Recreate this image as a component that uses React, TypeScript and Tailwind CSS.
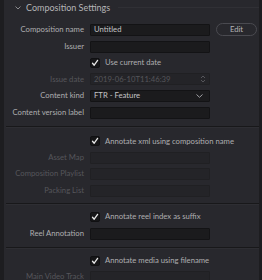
import React from "react";

const font = { fontFamily: 'Lato, "Open Sans", "Liberation Sans", sans-serif' };

function Check() {
  return (
    <div className="w-[10px] h-[10px] rounded-[2px] bg-[#161618] border border-[#101012] flex items-center justify-center">
      <svg width="8" height="8" viewBox="0 0 8 8">
        <path d="M1.5 4.3 L3.2 6.2 L6.6 1.4" fill="none" stroke="#e8e8e8" strokeWidth="1.3" strokeLinecap="round" strokeLinejoin="round" />
      </svg>
    </div>
  );
}

function Row({ label, dim, children }: { label: string; dim?: boolean; children?: React.ReactNode }) {
  return (
    <div className="flex items-center h-[12px] shrink-0">
      <div className={`w-[80px] text-right text-[7.7px] leading-none whitespace-nowrap ${dim ? "text-[#56565b]" : "text-[#aeaeb0]"}`}>{label}</div>
      <div className="ml-[6px] flex items-center">{children}</div>
    </div>
  );
}

function Input({ value, dim, right }: { value?: string; dim?: boolean; right?: React.ReactNode }) {
  return (
    <div className={`w-[120px] h-[12px] rounded-[1px] border flex items-center px-[3px] text-[7.7px] leading-none ${dim ? "bg-[#242428] border-[#202023] text-[#55555a]" : "bg-[#1b1b1d] border-[#131315] text-[#c4c4c6]"}`}>
      <span className="flex-1 whitespace-nowrap">{value}</span>
      {right}
    </div>
  );
}

function CheckRow({ label }: { label: string }) {
  return (
    <div className="flex items-center h-[11px] shrink-0">
      <div className="w-[86px]" />
      <Check />
      <span className="ml-[5px] text-[7.7px] leading-none text-[#aeaeb0] whitespace-nowrap">{label}</span>
    </div>
  );
}

function Sep() {
  return <div className="ml-[2px] h-px bg-[#18181a] border-b border-[#2e2e33] box-content" />;
}

export default function App() {
  return (
    <div className="w-[262px] h-[280px] bg-[#1d1d20] flex overflow-hidden" style={font}>
      <div className="ml-[4px] w-[255px] h-full bg-[#28282d] flex flex-col overflow-hidden">
        <div className="h-[15px] flex items-center shrink-0">
          <svg width="6" height="4" viewBox="0 0 6 4" className="ml-[11px]">
            <path d="M0.5 0.5 L3 3 L5.5 0.5" fill="none" stroke="#8a8a8e" strokeWidth="1" />
          </svg>
          <span className="ml-[5px] text-[9px] leading-none text-[#b4b4b6]">Composition Settings</span>
          <div className="flex-1 ml-[8px] h-px bg-[#303035]" />
        </div>
        <div className="mt-[8px] flex flex-col gap-[4.8px] shrink-0">
          <div className="flex items-center">
            <Row label="Composition name">
              <Input value="Untitled" />
            </Row>
            <div className="ml-[6px] w-[41px] h-[13px] rounded-full border border-[#4a4a50] flex items-center justify-center text-[7.7px] leading-none text-[#b4b4b6]">Edit</div>
          </div>
          <Row label="Issuer">
            <Input />
          </Row>
          <CheckRow label="Use current date" />
          <Row label="Issue date" dim>
            <Input
              value="2019-06-10T11:46:39"
              dim
              right={
                <svg width="6" height="8" viewBox="0 0 6 8">
                  <path d="M1 3 L3 1 L5 3 M1 5 L3 7 L5 5" fill="none" stroke="#55555a" strokeWidth="1" />
                </svg>
              }
            />
          </Row>
          <Row label="Content kind">
            <Input
              value="FTR - Feature"
              right={
                <svg width="7" height="4" viewBox="0 0 7 4" className="mr-[3px]">
                  <path d="M0.5 0.5 L3.5 3.3 L6.5 0.5" fill="none" stroke="#a0a0a4" strokeWidth="1" />
                </svg>
              }
            />
          </Row>
          <Row label="Content version label">
            <Input />
          </Row>
        </div>
        <div className="mt-[7px] shrink-0">
          <Sep />
        </div>
        <div className="mt-[8px] flex flex-col gap-[4.6px] shrink-0">
          <CheckRow label="Annotate xml using composition name" />
          <Row label="Asset Map" dim>
            <Input dim />
          </Row>
          <Row label="Composition Playlist" dim>
            <Input dim />
          </Row>
          <Row label="Packing List" dim>
            <Input dim />
          </Row>
        </div>
        <div className="mt-[6px] shrink-0">
          <Sep />
        </div>
        <div className="mt-[7px] flex flex-col gap-[5px] shrink-0">
          <CheckRow label="Annotate reel index as suffix" />
          <Row label="Reel Annotation">
            <Input />
          </Row>
        </div>
        <div className="mt-[7px] shrink-0">
          <Sep />
        </div>
        <div className="mt-[7px] flex flex-col gap-[4px] shrink-0">
          <CheckRow label="Annotate media using filename" />
          <Row label="Main Video Track" dim>
            <Input dim />
          </Row>
        </div>
      </div>
    </div>
  );
}
